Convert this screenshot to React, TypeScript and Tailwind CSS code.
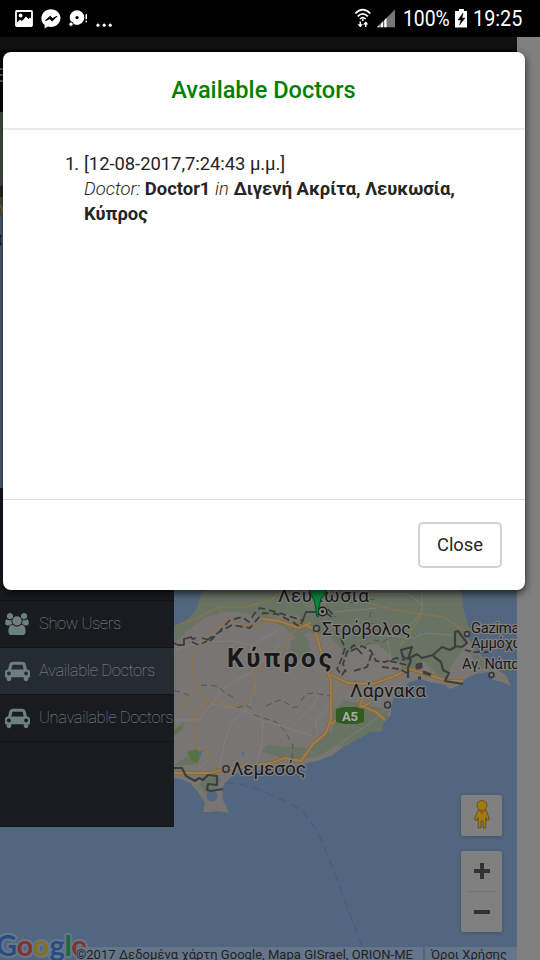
import React from "react";

const USERS_PATH =
  "M593 896q-162 5-265 128h-134q-82 0-138-40.5t-56-118.5q0-353 124-353 6 0 43.5 21t97.5 42.5 119 21.5q67 0 133-23-5 37-5 66 0 139 81 256zm1071 637q0 120-73 189.5t-194 69.5h-874q-121 0-194-69.5t-73-189.5q0-53 3.5-103.5t14-109 26.5-108.5 43-97.5 62-81 85.5-53.5 111.5-20q10 0 43 21.5t73 48 107 48 135 21.5 135-21.5 107-48 73-48 43-21.5q61 0 111.5 20t85.5 53.5 62 81 43 97.5 26.5 108.5 14 109 3.5 103.5zm-1024-1277q0 106-75 181t-181 75-181-75-75-181 75-181 181-75 181 75 75 181zm704 384q0 159-112.5 271.5t-271.5 112.5-271.5-112.5-112.5-271.5 112.5-271.5 271.5-112.5 271.5 112.5 112.5 271.5zm576 225q0 78-56 118.5t-138 40.5h-134q-103-123-265-128 81-117 81-256 0-29-5-66 66 23 133 23 59 0 119-21.5t97.5-42.5 43.5-21q124 0 124 353zm-128-609q0 106-75 181t-181 75-181-75-75-181 75-181 181-75 181 75 75 181z";
const CAR_PATH =
  "M480 1088q0-66-47-113t-113-47-113 47-47 113 47 113 113 47 113-47 47-113zm36-320h1016l-89-357q-2-8-14-17.5t-21-9.5h-768q-9 0-21 9.5t-14 17.5zm1372 320q0-66-47-113t-113-47-113 47-47 113 47 113 113 47 113-47 47-113zm160-96v384q0 14-9 23t-23 9h-96v128q0 80-56 136t-136 56-136-56-56-136v-128h-1024v128q0 80-56 136t-136 56-136-56-56-136v-128h-96q-14 0-23-9t-9-23v-384q0-93 65.5-158.5t158.5-65.5h28l105-419q23-94 104-157.5t179-63.5h768q98 0 179 63.5t104 157.5l105 419h28q93 0 158.5 65.5t65.5 158.5z";

function StatusBar() {
  return (
    <header className="flex h-[37px] w-full shrink-0 items-center bg-black pl-[15px] pr-[17px] text-white">
      <svg width="100" height="37" viewBox="15 0 100 37" fill="#fff">
        <rect x="16" y="11" width="16" height="15" rx="0.8" fill="none" stroke="#fff" strokeWidth="1.8" />
        <circle cx="20.6" cy="15.5" r="1.9" />
        <path d="M17 22.5l3-3 2 1.5 4-4.5 2.5 2.5 1.5-1.5 2 2v6H17z" />
        <path d="M51 9.2c-5.400 0-9.600 3.900-9.600 9 0 2.800 1.200 5.200 3.200 6.800v3.500l3.300-1.900c1 .3 2 .4 3.100.4 5.300 0 9.500-3.900 9.500-8.900s-4.200-8.900-9.500-8.900z" />
        <path d="M45.500 20.600l4.700-4.300 2.500 2.300 4.200-2.300-4.700 4.700-2.400-2.300z" fill="#000" stroke="#000" strokeWidth="1" />
        <circle cx="77" cy="17.600" r="7.300" />
        <circle cx="77" cy="17.600" r="1.600" fill="#000" />
        <circle cx="71" cy="24.200" r="2.200" stroke="#000" strokeWidth="1" />
        <path d="M85.500 14.300h1.500v5h-1.500zM85.500 20.700h1.500v1.600h-1.500z" />
        <circle cx="98" cy="25.200" r="1.600" />
        <circle cx="104.200" cy="25.200" r="1.600" />
        <circle cx="110.200" cy="25.200" r="1.600" />
      </svg>
      <div className="flex-1" />
      <svg width="46" height="37" viewBox="352 0 46 37" fill="none" stroke="#fff">
        <path d="M355.300 13.500q7.400-7.600 15 0M357.700 16.300q5-5 10.200 0M360 19q2.800-2.800 5.600 0" strokeWidth="1.700" />
        <circle cx="362.800" cy="20" r="1" fill="#fff" stroke="none" />
        <path d="M360.300 21.500v5M365.700 27v-5" strokeWidth="1.500" />
        <path d="M357.600 24.300h5.400l-2.700 3zM363 24.500h5.400l-2.700-3z" fill="#fff" stroke="none" />
        <path d="M395 9.500V27.300H377z" fill="#777" stroke="none" />
        <path d="M386.500 18v9.300H377z" fill="#fff" stroke="none" />
        <path d="M380 22v6M383.700 18v10" stroke="#000" strokeWidth="0.8" />
      </svg>
      <span className="ml-[5px] w-[48px] whitespace-nowrap text-[22.500px] leading-none"><span className="inline-block origin-left scale-x-[0.86]">100%</span></span>
      <svg className="ml-[3px]" width="15" height="37" viewBox="454 0 15 37">
        <path d="M459 9h5v2h3v16.500h-12V11h4z" fill="#fff" />
        <path d="M463 13l-5 7h3l-1.500 5 5.500-7h-3z" fill="#000" stroke="#000" strokeWidth=".5" />
      </svg>
      <span className="ml-[4px] w-[50px] whitespace-nowrap text-[22.500px] leading-none"><span className="inline-block origin-left scale-x-[0.88]">19:25</span></span>
    </header>
  );
}

function IslandMap() {
  return (
    <svg className="block" width="517" height="848" viewBox="0 112 517 848" fontFamily="Roboto, sans-serif">
      <defs>
        <clipPath id="land">
          <path d="M174 626L184 622 192 615 198 606 200 598 205 585H460L463 608 466 619 470 630 468 638 475 648 485 660 493 667 506 675 511 686 502 682 493 680 488 672 476 674 465 679 458 686 450 689 445 685 430 682 420 679 410 682 399 691 393 700 391 708 391 715 383 723 382 731 370 732 360 738 343 747 333 755 320 760 300 765 280 768 247 770 233 775 225 783 222 788 223 800 229 813 217 811 210 812 203 812 205 803 198 792 190 783 183 780 174 778Z" />
        </clipPath>
      </defs>
      <rect x="0" y="112" width="517" height="848" fill="#52677f" />
      <rect x="0" y="112" width="3" height="104" fill="#4b5545" />
      <path d="M0 186h3v11H0z" fill="#292b28" />
      <path d="M0 205q3 3 3 10" stroke="#8b713e" strokeWidth="2" fill="none" />
      <path d="M1 235q-3 5 0 10" stroke="#222" strokeWidth="2" fill="none" />

      <g clipPath="url(#land)">
        <rect x="170" y="580" width="347" height="240" fill="#787573" />
        <g fill="#687363">
          <path d="M174 585h290l8 50-12 18-8 12-8 16-26-4-22-9-18-10-14-2-14 7-10-16-12-11-20-4-10 8-14-13-28-12-28-4-24 7-18 14-14 14-28 0z" />
          <path d="M291 640l16-4 6 26-9 2-14-14zM267 745l38 3 11 9-25 3-30-8zM330 714l14-14 16 4 26 5 4 18-46 20-13-2 2-22zM310 750l8-15 17-4 11 8-29 18zM174 765l14-9 8 8-18 2zM203 776l18 2-6 14-10 1-5-8z" />
          <path d="M470 642l10 15 12 13-17-2z" />
          <path d="M174 730l10-8-2 8-8 6z" fill="#607454" />
          <path d="M187 752l9-3 5 4-3 10-6-1z" fill="#59713f" />
        </g>
        <g fill="#7a7775">
          <path d="M342 664l14-18 22-2 13 12 11 10-8 15-24 4-20-6zM405 675l18-14 16 15 2 8-22-4z" />
          <path d="M276 616l18-3 12 8-20 4zM198 640l20-15 18 2-6 12z" opacity=".6" />
        </g>
        <g fill="none" stroke="#8a8886" strokeWidth=".8" opacity=".75">
          <path d="M174 650l24-8 34-1 19 4 26-14M210 706l16-20 24-13 20-19 14-13M256 685l-7 22-18 16-8 24M174 720l25 0 13-16 32 6 19 11 19 5 30 10M263 721l-1 24-6 20M292 726l20-19 10-20M224 748l-7 30M190 775l18-14M345 594h64l13 11M422 581v30l-13 16-22 10 4 22M374 635l40 3 10-5 29 2M335 612l42-4M311 606l20-17M330 705l-15 16 4 17M392 703l-20 19-20 13-17 13" />
        </g>
        <g fill="none" stroke="#8f754a" strokeWidth="1.200">
          <path d="M174 626l22-7 22-12h28l25-7 16-14 19-6M218 607l8 10 2 10M248 587l-14-5M200 694l-7-20 0-20 17-22 17-10 31 4 19-8 22 2 12 8M205 694l-14 1-10 13 14 6 1 34 12 4 10 12" />
          <path d="M205 694v9l-9 12M256 669l-3 28-17 11-25-8M256 669l21-14 17-24 16-10M320 616l5-13 20-8M370 603l20 6 25 4 28 4 24 15M422 613l-13 22-10 12M462 583v16l5 17M339 679l-7 17M291 629l-8-7-21-2" />
        </g>
        <g fill="none" stroke="#8a6a3d" strokeWidth="4" strokeLinejoin="round">
          <path d="M174 773h37l14-4 46-6 14-5 16 3 12-17 13-11 5-14 0-38-9-26-7-25-10-6M262 619l17 2 20 7 12-5M331 675l17 8 25 1 22-8 14-7 17 5 22 7h27l14-5M368 685l-8 20 16 7 9 8M331 724l15-10 24-11" />
        </g>
        <g fill="none" stroke="#9a7e54" strokeWidth="1.800" strokeLinejoin="round">
          <path d="M174 773h37l14-4 46-6 14-5 16 3 12-17 13-11 5-14 0-38-9-26-7-25-10-6M262 619l17 2 20 7 12-5M331 675l17 8 25 1 22-8 14-7 17 5 22 7h27l14-5M368 685l-8 20 16 7 9 8M331 724l15-10 24-11" />
        </g>
        <circle cx="212" cy="796" r="5.500" fill="#52677f" />
        <path d="M199 752l4-2-4 9zM423 630l3 2-3 2zM242 752l3 1-3 3z" fill="#456f9b" />
      </g>

      <g fill="none" stroke="#3e3e3e" strokeWidth="1.800" strokeLinejoin="round">
        <path d="M174 643l4 2h6l0-6 7-2 2 2 3-1" />
        <path d="M192 642l7 3 8-4M202 638l10 3M210 641l8-8 12-13 12-3 7 5 6-9 5-5 16 4 22 7 6 2M207 640l14-9 11-6 18 3 9-11 4-4 14 1 16 8 8 6" strokeDasharray="7 4" />
        <path d="M301 624l5-12h10" />
        <path d="M326 613l6 4M328 609l7 8M341 639l4 9-4 12-4 9 5 6 4-6M362 654l-8-9-7 7-4 12 3 8M351 651l11-5 9 5 5 10 9 1 11-4 9 2M354 671l13-4 5-14M390 661l17 4M382 667l17 2 10 5" strokeDasharray="7 3" />
        <path d="M408 678v-10l3-8-8-3-2-7 11-3-4 12 9-5 5 4 11-3 9-8 8 3 5-3 0-15 3-1 9 12-5 4-8-1M433 656l8 6 2 8 6 3-4 8 18 3" strokeWidth="2.200" />
        <path d="M465 650l8 2 16 0" strokeDasharray="6 3" />
        <path d="M417 665l4-1 0 3-4 1zM423 672l8 3M418 678h3" strokeWidth="3" />
        <path d="M174 768h8l4 8 9 5 4-3 4 2 5-5 9 1 0 9-9-1-1 6 4 1 12-2" strokeWidth="2.200" />
      </g>
      <g fill="none" stroke="#555" strokeWidth="1" strokeDasharray="6 4">
        <path d="M174 691l7 1 9 4M201 685l17 1 7 7 8 4M237 708l9-3 6 4M266 706l13-6 8 3 5 5 8-2M301 701l5-7 8-1 16 3M254 715l22 7 9 9 8 15-1 14M349 603l26-4M371 612l-3 10 8 3M365 646l9-6 9 2 9-6" />
      </g>
      <path d="M225 784l10-1 20 5 26 11 21 11 16 22 18 44 28 76" fill="none" stroke="#4a5a88" strokeWidth="1.400" strokeDasharray="9 5" />

      {/* Town circles and motorway shield */}
      <circle cx="322.500" cy="611.500" r="4.300" fill="#8a8886" stroke="#1e1e1e" strokeWidth="1.600" />
      <circle cx="322.500" cy="611.500" r="1.700" fill="#1e1e1e" />
      <g fill="#777" stroke="#333" strokeWidth="1.500">
        <circle cx="316.500" cy="628.500" r="3" />
        <circle cx="467" cy="634" r="2.500" />
        <circle cx="491.500" cy="675" r="2.500" />
        <circle cx="387.500" cy="705" r="3" />
        <circle cx="226" cy="769" r="3.200" />
      </g>
      <path d="M336 709l8-2h12l8 2v13l-8 2h-12l-8-2z" fill="#315b20" />
      <text x="342" y="721" fontSize="13" fontWeight="700" fill="#aaa" textLength="16">A5</text>

      <g fill="#191919" stroke="#838180" strokeWidth="2.500" paintOrder="stroke" strokeLinejoin="round">
        <text x="278" y="602" fontSize="19" textLength="91">Λευκωσία</text>
        <text x="322" y="635" fontSize="18" textLength="89">Στρόβολος</text>
        <text x="227" y="667" fontSize="26" fontWeight="700" textLength="105">Κύπρος</text>
        <text x="350" y="697" fontSize="19" textLength="76">Λάρνακα</text>
        <text x="231" y="775" fontSize="19" textLength="75">Λεμεσός</text>
        <text x="471" y="633" fontSize="14.800" letterSpacing="-.3">Gazimağusa</text>
        <text x="471" y="648" fontSize="14.800" letterSpacing="-.3">Αμμόχωστος</text>
        <text x="462" y="669" fontSize="14.600" letterSpacing="-.2">Αγ. Νάπα</text>
      </g>
      {/* Teardrop marker */}
      <path d="M306 580h24q-3 13-9 19-3 8-3 18-2 0-2-8-1-8-4-13-4-5-6-16z" fill="#08873f" stroke="#064b24" strokeWidth="1" />

      {/* Map provider wordmark */}
      <text x="-4" y="956" fontFamily="Lato, sans-serif" fontSize="29" fontWeight="700" stroke="#64778d" strokeWidth="4" paintOrder="stroke" strokeLinejoin="round" textLength="91">
        <tspan fill="#294c83">G</tspan><tspan fill="#86312b">o</tspan><tspan fill="#89701c">o</tspan><tspan fill="#294c83">g</tspan><tspan fill="#206937">l</tspan><tspan fill="#86312b">e</tspan>
      </text>
    </svg>
  );
}

function SideItem({ label, icon, active }: { label: string; icon: "users" | "car"; active?: boolean }) {
  return (
    <li className={`flex h-[47px] items-center overflow-hidden border-b border-[#111417] pl-[5px] ${active ? "bg-[#252b33]" : ""}`}>
      {icon === "users" ? (
        <svg className="w-[24px] shrink-0" height="22" viewBox="0 0 1920 1792" fill="#6d7f7e"><path d={USERS_PATH} /></svg>
      ) : (
        <svg className="w-[25px] shrink-0" height="22" viewBox="0 0 2048 1792" fill="#6d7f7e"><path d={CAR_PATH} /></svg>
      )}
      <span className={`whitespace-nowrap text-[16.500px] font-thin tracking-[-0.38px] text-[#8a9290] ${icon === "users" ? "ml-[10px]" : "ml-[9px]"}`}>{label}</span>
    </li>
  );
}

function MapControls() {
  return (
    <div className="absolute right-[15px] top-[683px] flex w-[41px] flex-col gap-[15px]">
      <div className="flex h-[41px] items-center justify-center rounded-[2px] bg-[#808080] shadow-[0_1px_4px_rgba(0,0,0,0.2)]">
        <svg className="mb-[3px]" width="18" height="30" viewBox="0 0 18 30" fill="#a07b12" stroke="#694f20" strokeWidth="1">
          <path d="M5 11h8l3.500 9.500-2.500 1-1.200-3V29H10v-7H8v7H5.200V18.500L4 21.500l-2.500-1z" />
          <circle cx="9" cy="6.500" r="5" />
          <path d="M6 11.500h6L9 16z" fill="#9a581d" stroke="none" />
        </svg>
      </div>
      <div className="flex h-[81px] flex-col items-center rounded-[2px] bg-[#808080] shadow-[0_1px_4px_rgba(0,0,0,0.2)]">
        <div className="flex h-[40px] items-center"><svg width="16" height="16"><path d="M0 6h6V0h4v6h6v4h-6v6H6v-6H0z" fill="#333" /></svg></div>
        <div className="h-px w-[28px] bg-[#737373]" />
        <div className="flex h-[40px] items-center"><svg width="16" height="4"><rect width="16" height="4" fill="#333" /></svg></div>
      </div>
    </div>
  );
}

function DoctorsDialog() {
  return (
    <section role="dialog" aria-label="Available Doctors" className="absolute left-[3px] top-[52px] flex h-[538px] w-[522px] flex-col rounded-[8px] bg-white text-[#252525] shadow-[0_3px_9px_rgba(0,0,0,0.75)]">
      <div className="flex h-[78px] items-center justify-center border-b-2 border-[#eaeaea] pt-[2px] pr-[1px]">
        <h4 className="text-[23.600px] font-medium leading-none text-[#008000]">Available Doctors</h4>
      </div>
      <div className="flex-1 pl-[62px] pt-[21px] text-[18.400px] leading-[25px]">
        <ol className="flex">
          <li className="flex">
            <span className="w-[19px] tracking-[-1px]">1.</span>
            <p className="w-[390px]">
              <span className="tracking-[-0.03px]">[12-08-2017,7:24:43 μ.μ.]</span><br />
              <i className="font-light">Doctor:</i> <b>Doctor1</b> <i className="font-light">in</i> <b>Διγενή Ακρίτα, Λευκωσία, Κύπρος</b>
            </p>
          </li>
        </ol>
      </div>
      <div className="flex h-[91px] items-center justify-end border-t-[1px] border-[#dedede] pr-[23px]">
        <button className="h-[46px] w-[84px] rounded-[5px] border-2 border-[#d0d0d0] text-[18.400px] leading-none">Close</button>
      </div>
    </section>
  );
}

export default function App() {
  return (
    <div className="relative flex h-[960px] w-[540px] flex-col overflow-hidden bg-[#808080] font-[Roboto,'Noto_Sans',sans-serif]">
      <StatusBar />
      <main className="w-[517px]">
        <div className="h-[13px] bg-[#111]" />
        <div className="flex h-[62px] items-center bg-[#060606] pb-[12px]">
          <div className="flex flex-col gap-[4px]">
            <i className="h-[2px] w-[4px] bg-[#666]" />
            <i className="h-[2px] w-[4px] bg-[#666]" />
            <i className="h-[2px] w-[4px] bg-[#666]" />
          </div>
        </div>
        <div className="relative h-[848px]">
          <IslandMap />
          <nav className="absolute left-0 top-[376px] h-[339px] w-[174px] bg-[#181b1f] pt-[112px]">
            <ul className="border-t border-[#111417]">
              <SideItem label="Show Users" icon="users" />
              <SideItem label="Available Doctors" icon="car" active />
              <SideItem label="Unavailable Doctors" icon="car" />
            </ul>
          </nav>
          <MapControls />
          <footer className="absolute bottom-0 right-0 flex h-[13px] gap-[2px] overflow-hidden whitespace-nowrap text-[13px] leading-[15px] text-[#222]">
            <span className="w-[347px] bg-[#66768a] tracking-[0.04px]">©2017 Δεδομένα χάρτη Google, Mapa GISrael, ORION-ME</span>
            <span className="w-[92px] bg-[#66768a] pl-[6px]">Όροι Χρήσης</span>
          </footer>
        </div>
      </main>
      <DoctorsDialog />
    </div>
  );
}
